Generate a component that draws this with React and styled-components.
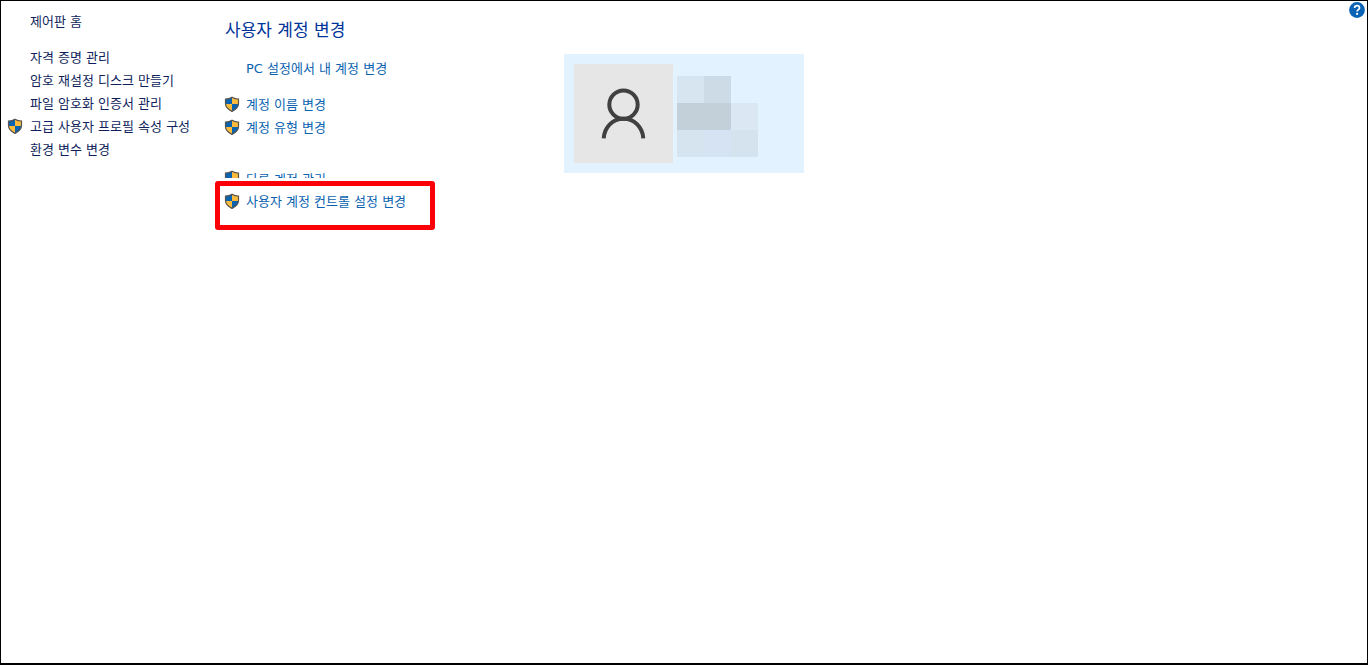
import styled, { createGlobalStyle, css } from 'styled-components';

const GlobalStyle = createGlobalStyle`
    * {
        box-sizing: border-box;
    }

    body {
        margin: 0;
        background-color: #ffffff;
        font-family: 'DejaVu Sans', 'Noto Sans CJK KR', sans-serif;
        font-size: 13px;
        line-height: 23px;
    }
`;

const Window = styled.div`
    min-height: 100vh;
    display: grid;
    grid-template-columns: 214px 349px 240px 1fr;
    align-items: start;
    border: 1px solid #000000;
    border-bottom-width: 2px;
`;

const Sidebar = styled.nav`
    display: flex;
    flex-direction: column;
    padding: 8px 0px 0px 6px;
`;

const SideList = styled.div`
    display: flex;
    flex-direction: column;
    margin-top: 13px;
`;

const Main = styled.main`
    display: flex;
    flex-direction: column;
    padding-top: 16px;
`;

const Title = styled.h1`
    margin: 0px;
    padding-left: 10px;
    color: #003399;
    font-size: 17px;
    font-weight: 400;
    line-height: 26px;
`;

const TaskGroup = styled.div`
    display: flex;
    flex-direction: column;
    margin-top: ${(props) => props.$gap}px;
    padding-left: 9px;
`;

const Row = styled.div`
    display: flex;
    align-items: center;
    height: 23px;
    ${(props) =>
        props.$cut &&
        css`
            align-items: flex-start;
            height: 12px;
            overflow: hidden;
        `}
`;

const IconSlot = styled.span`
    flex: none;
    display: flex;
    align-items: center;
    width: ${(props) => (props.$side ? 23 : 22)}px;
    height: 23px;
`;

const Link = styled.a`
    padding-top: 2px;
    color: ${(props) => (props.$side ? '#0f1f5c' : '#0b63b0')};
    text-decoration: none;
    white-space: nowrap;

    &:hover {
        text-decoration: underline;
    }
`;

const Highlight = styled.div`
    width: 220px;
    height: 49px;
    margin-top: 3px;
    padding: 3px 0px 0px 4px;
    border: 5px solid #fb0007;
    border-radius: 3px;
`;

const AccountCard = styled.section`
    display: flex;
    gap: 4px;
    height: 119px;
    margin-top: 53px;
    padding: 10px;
    background-color: #e3f2ff;
`;

const Avatar = styled.div`
    display: flex;
    width: 99px;
    height: 99px;
    background-color: #e6e6e6;
`;

const Mosaic = styled.div`
    display: grid;
    grid-template-columns: repeat(3, 27px);
    grid-template-rows: repeat(3, 27px);
    margin-top: 12px;
`;

const Cell = styled.span`
    background-color: ${(props) => props.$color};
`;

const HelpButton = styled.button`
    justify-self: end;
    display: flex;
    margin: 1px 2px 0px 0px;
    padding: 0px;
    border: none;
    background: none;
    cursor: pointer;
`;

const Shield = () => (
    <svg width="16" height="16" viewBox="0 0 16 16" aria-hidden="true">
        <path d="M8 1.2C6.3 2.3 3.6 3 1.500 3V7.500C1.500 11 4 13.400 8 15.400Z" fill="#0a63b1" />
        <path d="M8 1.2C9.700 2.300 12.400 3 14.500 3V7.500C14.500 11 12 13.400 8 15.400Z" fill="#fdbb3c" />
        <path d="M1.500 8H8V15.400C4 13.400 1.700 11.200 1.500 8Z" fill="#fdbb3c" />
        <path d="M14.500 8H8V15.400C12 13.400 14.300 11.200 14.500 8Z" fill="#0a63b1" />
        <path
            d="M8 1.2C6.300 2.300 3.600 3 1.500 3V7.500C1.500 11 4 13.400 8 15.400C12 13.400 14.500 11 14.500 7.500V3C12.400 3 9.700 2.300 8 1.200Z"
            fill="none"
            stroke="#56544e"
            strokeWidth="1.2"
        />
    </svg>
);

const Person = () => (
    <svg width="99" height="99" viewBox="0 0 99 99" fill="none" stroke="#404040" strokeWidth="4" aria-hidden="true">
        <circle cx="49.5" cy="40.6" r="14.2" />
        <path d="M29.7 74.3C30.5 63 38.5 54.800 49.5 54.800S68.500 63 69.300 74.300" />
    </svg>
);

const HelpIcon = () => (
    <svg width="16" height="16" viewBox="0 0 16 16" aria-hidden="true">
        <circle cx="8" cy="8" r="7.9" fill="#0b63b5" />
        <path
            d="M5.6 6.1C5.6 4.6 6.6 3.7 8.1 3.7S10.5 4.6 10.5 5.9C10.5 7.5 8.1 7.7 8.1 9.6"
            fill="none"
            stroke="#ffffff"
            strokeWidth="1.7"
        />
        <circle cx="8.1" cy="11.9" r="1.1" fill="#ffffff" />
    </svg>
);

const Task = ({ label, shield, side, cut }) => (
    <Row $cut={cut}>
        <IconSlot $side={side}>{shield && <Shield />}</IconSlot>
        <Link href="#" $side={side}>
            {label}
        </Link>
    </Row>
);

const sideTasks = [
    { label: '자격 증명 관리' },
    { label: '암호 재설정 디스크 만들기' },
    { label: '파일 암호화 인증서 관리' },
    { label: '고급 사용자 프로필 속성 구성', shield: true },
    { label: '환경 변수 변경' },
];

const mosaicColors = [
    '#d7e5f1',
    '#cddbe7',
    'transparent',
    '#c3d0da',
    '#c3d0da',
    '#dbe8f4',
    '#d6e4f0',
    '#d5e3f3',
    '#d5e3ef',
];

const App = () => {
    return (
        <>
            <GlobalStyle />
            <Window>
                <Sidebar>
                    <Task side label="제어판 홈" />
                    <SideList>
                        {sideTasks.map((task) => (
                            <Task key={task.label} side {...task} />
                        ))}
                    </SideList>
                </Sidebar>
                <Main>
                    <Title>사용자 계정 변경</Title>
                    <TaskGroup $gap={13}>
                        <Task label="PC 설정에서 내 계정 변경" />
                    </TaskGroup>
                    <TaskGroup $gap={13}>
                        <Task shield label="계정 이름 변경" />
                        <Task shield label="계정 유형 변경" />
                    </TaskGroup>
                    <TaskGroup $gap={28}>
                        <Task shield cut label="다른 계정 관리" />
                    </TaskGroup>
                    <Highlight>
                        <Task shield label="사용자 계정 컨트롤 설정 변경" />
                    </Highlight>
                </Main>
                <AccountCard>
                    <Avatar>
                        <Person />
                    </Avatar>
                    <Mosaic>
                        {mosaicColors.map((color, index) => (
                            <Cell key={index} $color={color} />
                        ))}
                    </Mosaic>
                </AccountCard>
                <HelpButton type="button" aria-label="도움말">
                    <HelpIcon />
                </HelpButton>
            </Window>
        </>
    );
};

export default App;
